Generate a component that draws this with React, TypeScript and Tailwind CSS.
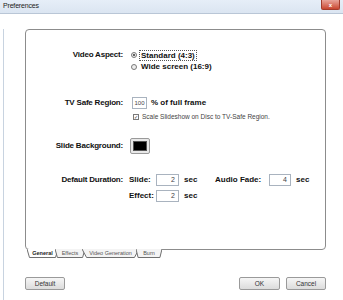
import React from 'react';

const font = { fontFamily: '"Liberation Sans", Arial, sans-serif' };

function Box({ value, w }: { value: string; w: string }) {
  return (
    <div className={`${w} h-[12px] border border-[#a9b3bf] bg-white text-[7px] leading-[10px] text-right pr-[3px] text-[#444] font-normal`}>
      {value}
    </div>
  );
}

function Tab({ label, w, active }: { label: string; w: string; active?: boolean }) {
  return (
    <div className={`relative ${w} h-[9px] -ml-[3px] first:ml-0 flex items-center justify-center`}>
      <svg className="absolute inset-0 w-full h-full" viewBox="0 0 100 9" preserveAspectRatio="none">
        <polyline
          points="0,0 8,8.5 92,8.5 100,0"
          fill={active ? '#ffffff' : '#f4f4f4'}
          stroke="#6f6f6f"
          strokeWidth="1"
          vectorEffect="non-scaling-stroke"
        />
      </svg>
      <span className={`relative text-[5.5px] leading-none ${active ? 'font-bold text-[#222]' : 'text-[#555]'}`}>{label}</span>
    </div>
  );
}

function Btn({ label, w }: { label: string; w: string }) {
  return (
    <div className={`${w} h-[13px] rounded-[2px] border border-[#9a9a9a] bg-gradient-to-b from-[#f6f6f6] to-[#dcdcdc] flex items-center justify-center text-[6.5px] text-[#333]`}>
      {label}
    </div>
  );
}

export default function App() {
  return (
    <div className="w-[343px] h-[300px] bg-white overflow-hidden relative text-[#111]" style={font}>
      {/* title bar */}
      <div className="h-[14px] bg-gradient-to-b from-[#e6eef8] to-[#dbe5f1] border-b border-[#b9c6d6] flex items-center pl-[3px] relative">
        <span className="text-[7px] text-[#222] tracking-tight">Preferences</span>
        <div className="absolute right-[3px] top-0 w-[19px] h-[10px] rounded-b-[2px] bg-gradient-to-b from-[#e8a49a] to-[#c8452f] border border-[#a33c2c] border-t-0 flex items-center justify-center text-[6px] font-bold text-white leading-none">
          x
        </div>
      </div>

      <div className="ml-[3px] border-l border-[#c8d3e0] h-[286px] pl-[21px]">
        {/* panel */}
        <div className="mt-[15px] w-[301px] h-[221px] border border-[#8c8c8c] rounded-[4px] pt-[19px] text-[8px]">
          <div className="flex items-center h-[12px]">
            <div className="w-[98px] text-right font-bold pr-[1px] tracking-tight">Video Aspect:</div>
            <div className="flex items-center gap-[2px] ml-[7px]">
              <span className="w-[6px] h-[6px] rounded-full border border-[#7a7a7a] bg-[#eee] flex items-center justify-center">
                <span className="w-[2px] h-[2px] rounded-full bg-[#333]" />
              </span>
              <span className="font-bold border border-dotted border-[#555] px-[1px] leading-[9px]">Standard (4:3)</span>
            </div>
          </div>
          <div className="flex items-center h-[12px]">
            <div className="w-[98px]" />
            <div className="flex items-center gap-[2px] ml-[7px]">
              <span className="w-[6px] h-[6px] rounded-full border border-[#7a7a7a] bg-[#eee]" />
              <span className="font-bold px-[2px]">Wide screen (16:9)</span>
            </div>
          </div>

          <div className="flex items-center h-[12px] mt-[24px]">
            <div className="w-[98px] text-right font-bold pr-[1px] tracking-tight">TV Safe Region:</div>
            <div className="flex items-center gap-[4px] ml-[8px]">
              <div className="w-[15px] h-[12px] border border-[#a9b3bf] text-[6px] flex items-center justify-center text-[#444]">100</div>
              <span className="font-bold">% of full frame</span>
            </div>
          </div>
          <div className="flex items-center h-[12px] mt-[2px]">
            <div className="w-[98px]" />
            <div className="flex items-center gap-[3px] ml-[9px]">
              <span className="w-[6px] h-[6px] border border-[#7a7a7a] bg-white text-[5px] leading-[5px] text-center text-[#333]">✓</span>
              <span className="text-[6.5px] text-[#444]">Scale Slideshow on Disc to TV-Safe Region.</span>
            </div>
          </div>

          <div className="flex items-center h-[16px] mt-[15px]">
            <div className="w-[98px] text-right font-bold pr-[1px] tracking-tight">Slide Background:</div>
            <div className="ml-[6px] w-[20px] h-[16px] rounded-[2px] border border-[#9a9a9a] bg-[#e8e8e8] p-[2px]">
              <div className="w-full h-full bg-black border border-[#555]" />
            </div>
          </div>

          <div className="flex items-center h-[12px] mt-[20px] font-bold">
            <div className="w-[98px] text-right pr-[1px] tracking-tight">Default Duration:</div>
            <div className="ml-[5px] w-[27px]">Slide:</div>
            <Box value="2" w="w-[23px]" />
            <span className="ml-[5px] w-[31px]">sec</span>
            <div className="w-[54px]">Audio Fade:</div>
            <Box value="4" w="w-[22px]" />
            <span className="ml-[5px]">sec</span>
          </div>
          <div className="flex items-center h-[12px] mt-[4px] font-bold">
            <div className="w-[98px]" />
            <div className="ml-[5px] w-[27px]">Effect:</div>
            <Box value="2" w="w-[23px]" />
            <span className="ml-[5px]">sec</span>
          </div>
        </div>

        {/* tabs */}
        <div className="flex ml-[2px] -mt-[1px]">
          <Tab label="General" w="w-[31px]" active />
          <Tab label="Effects" w="w-[30px]" />
          <Tab label="Video Generation" w="w-[57px]" />
          <Tab label="Burn" w="w-[26px]" />
        </div>

        {/* buttons */}
        <div className="flex items-center mt-[19px] w-[301px]">
          <Btn label="Default" w="w-[40px]" />
          <div className="flex-1" />
          <Btn label="OK" w="w-[41px]" />
          <div className="w-[6px]" />
          <Btn label="Cancel" w="w-[40px]" />
        </div>
      </div>
    </div>
  );
}
